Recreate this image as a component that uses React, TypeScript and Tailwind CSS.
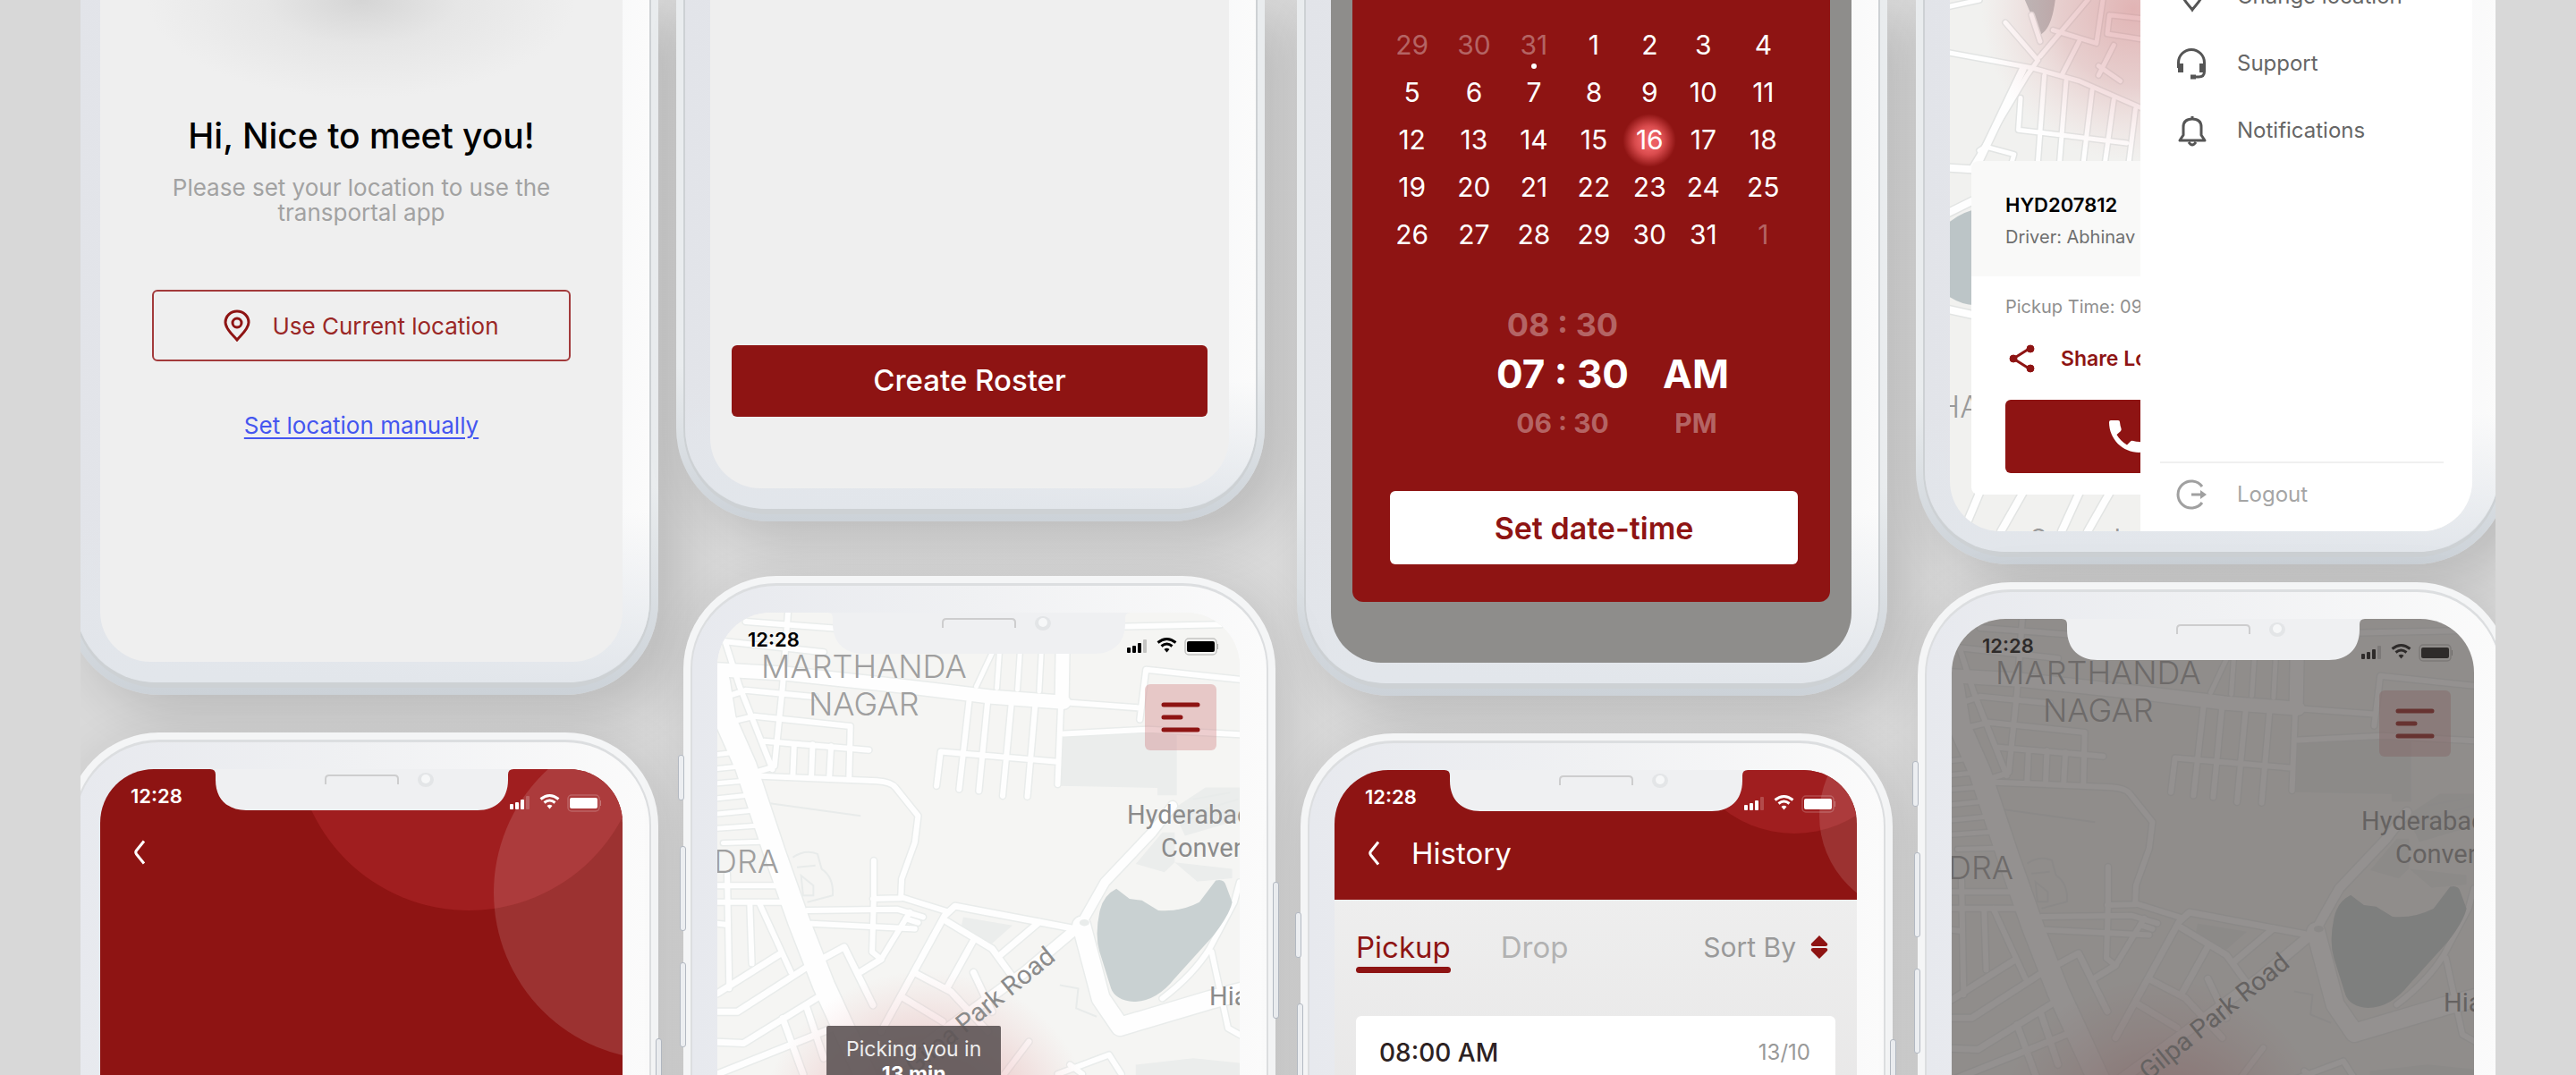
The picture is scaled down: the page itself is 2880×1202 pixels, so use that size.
import type { ReactNode } from "react";

type Road = [width: number, d: string];

/* ---------- Phone shell ---------- */

function SideButtons() {
  const edge = "absolute w-[7px] rounded-[3px] border border-[#b3b9c2] bg-[#eceef1]";
  return (
    <>
      <span className={`${edge} -left-[6px] top-[200px] h-[51px]`} />
      <span className={`${edge} -left-[4px] top-[302px] h-[95px]`} />
      <span className={`${edge} -left-[4px] top-[432px] h-[95px]`} />
      <span className={`${edge} -right-[4px] top-[342px] h-[153px]`} />
    </>
  );
}

function TopPhone({ className, screen, children }: { className: string; screen: string; children: ReactNode }) {
  return (
    <section
      className={`rounded-b-[104px] bg-linear-to-b from-[#e9ecee] from-70% to-[#ccd2d8] px-2 pb-2 shadow-[24px_20px_60px_rgba(0,0,0,0.14)] ${className}`}
    >
      <div className="rounded-b-[96px] border-x-2 border-b-[6px] border-[#cdd1d4] bg-linear-to-r from-[#e2e4e9] via-[#e9ebf0] via-50% to-[#fbfbfb]">
        <div className="rounded-b-[90px] bg-linear-to-b from-transparent from-75% to-[#e2e6eb] pr-[30px] pb-[23px] pl-[28px]">
          <div className={`relative overflow-hidden rounded-b-[56px] ${screen}`}>{children}</div>
        </div>
      </div>
    </section>
  );
}

function Notch() {
  return (
    <div className="pointer-events-none absolute inset-x-0 top-0 z-20 flex justify-center">
      <svg width="339" height="47" viewBox="0 0 339 47" aria-hidden="true">
        <path d="M0 0Q6 0 6 6V12C6 34 20 46 40 46H299C319 46 333 34 333 12V6Q333 0 339 0Z" fill="#eff0f2" />
        <path d="M129 17V11Q129 7 133 7H206Q210 7 210 11V17" fill="none" stroke="#cdcdce" strokeWidth="2" />
        <ellipse cx="241" cy="12" rx="9" ry="8" fill="#e3e5e7" />
        <ellipse cx="241" cy="11" rx="5" ry="5" fill="#f6f7f8" />
      </svg>
    </div>
  );
}

function BottomPhone({ screen, children }: { screen: string; children: ReactNode }) {
  return (
    <section className="relative rounded-t-[104px] bg-[#f4f5f6] px-2 pt-2 shadow-[10px_10px_60px_rgba(0,0,0,0.12)]">
      <SideButtons />
      <div className="relative rounded-t-[96px] border-x-2 border-t-[3px] border-[#dcdee0] bg-linear-to-r from-[#e7e9ee] via-[#f0f1f3] via-50% to-[#fbfbfb]">
        <div className="pt-[30px] pr-[30px] pl-[28px]">
          <div className={`relative min-h-[600px] overflow-hidden rounded-t-[60px] ${screen}`}>
            {children}
            <Notch />
          </div>
        </div>
      </div>
    </section>
  );
}

function StatusBar() {
  return (
    <div className="relative flex items-start justify-between pt-4 pr-6 pl-[34px]">
      <span className="text-[22px] leading-7 font-semibold">12:28</span>
      <svg className="mt-2" width="104" height="28" viewBox="0 0 104 28" fill="currentColor" aria-hidden="true">
        <rect x="2" y="15" width="4" height="6" rx="1" />
        <rect x="8" y="13" width="4" height="8" rx="1" />
        <rect x="14" y="10" width="4" height="11" rx="1" />
        <rect x="20" y="6" width="4" height="15" rx="1" opacity=".2" />
        <path d="M46.500 20.500l-3-3.500q3-2.500 6 0z" />
        <path d="M40.500 13.500q6-5 12 0M36.500 9.500q10-8 20 0" fill="none" stroke="currentColor" strokeWidth="3" />
        <rect x="67" y="5" width="35" height="18" rx="4" fill="none" stroke="currentColor" strokeWidth="1.500" opacity=".2" />
        <rect x="69" y="8" width="31" height="12" rx="2" />
        <rect x="103" y="11" width="1" height="6" opacity=".3" />
      </svg>
    </div>
  );
}

function BackButton() {
  return (
    <button type="button" aria-label="Back" className="flex h-10 w-5 items-center justify-center">
      <svg width="16" height="28" viewBox="0 0 16 28" fill="none" stroke="currentColor" strokeWidth="3" aria-hidden="true">
        <path d="M13 1.500L4.500 12q-1.500 2 0 4L13 26.500" />
      </svg>
    </button>
  );
}

/* ---------- Maps ---------- */

const CITY_ROADS: Road[] = [
  [6, "M200 205L415 225M150 265L390 297M303 178L290 400L270 640M150 265L185 400L265 650"],
  [6, "M131 440L200 412L370 432M170 505L220 490L455 520L452 672M245 565L500 592M318 575L315 665M363 575L360 668M408 580L404 668M222 660L262 645"],
  [5, "M818 300L812 405M868 300L862 410M920 300L915 415M800 300L762 400"],
  [6, "M745 435L720 710M790 437L768 715M848 440L826 730M906 445L886 732M665 700L675 597L960 627M968 450L960 695"],
  [6, "M975 448L1160 465M1160 500L1175 350L1407 380M975 543L1180 530L1407 545M1125 220L1357 214"],
  [5, "M131 605L165 600M131 648L180 642M131 692L195 685M131 738L205 728M131 784L215 774M131 828L225 820M145 872L238 868"],
  [6, "M235 670L520 685Q555 688 565 705L620 790L612 870L580 980L578 1035L690 1078M512 925L512 1040L508 1200L530 1222L600 1080M510 1040L578 1038"],
  [6, "M131 1000L290 1000M131 1050L330 1050M155 965L160 1310M210 1050L215 1235M232 1050L310 1260M131 1115L155 1118"],
  [6, "M350 1075L570 1072L632 1095M360 1115L612 1130M590 1100L620 1112"],
  [7, "M131 1325L285 1205M131 1380L180 1380L350 1245L440 1185L510 1360M480 1260L530 1222M131 1472L195 1475L385 1330M131 1568L330 1470L410 1430M348 1365L390 1520M290 1400L340 1568"],
  [7, "M530 1440L685 1090L710 1062L1000 1130M690 1108L800 1190L850 1275M915 1110L815 1215M755 1165L690 1310M615 1265L700 1320L790 1440M580 1335L680 1410M755 1262L800 1380"],
  [6, "M890 1470L830 1568M960 1568L1085 1510L1115 1568M990 1540L1020 1568M1215 1340Q1290 1270 1330 1190L1390 1050L1403 990M1335 1200L1375 1430L1407 1452"],
  [10, "M1020 1110L1075 990L1190 840L1240 760"],
  [11, "M1005 1130L880 1260L540 1568"],
  [15, "M131 350L300 362L600 402L800 432L975 448M972 300L970 450"],
  [20, "M1018 1120L1065 1340L1112 1425L1330 1345L1407 1320"],
  [24, "M135 385L150 500L200 640L270 900L330 1110L390 1300L490 1568"],
];

const SUBURB_ROADS: Road[] = [
  [5, "M110 20L190 0M120 140L310 180L420 215L570 290M330 150L440 0M250 60L325 160M325 160L300 200L175 440M310 40L330 110"],
  [5, "M285 260L280 345L530 380M340 200L325 430M390 215L375 430M450 240L430 430M500 265L480 430M550 290L535 430M205 390L270 410L265 430"],
  [5, "M360 80L460 115L475 0M420 110L380 200M500 120L465 200M465 175L515 215M490 40L570 50M490 40L485 90L570 105M190 400L210 385"],
  [8, "M110 445L180 450L290 185M110 570L180 530M110 820L190 840M190 1310L150 1420M290 1310L240 1411M420 1310L380 1411M490 1310L440 1411"],
];

function Roads({ roads, casing }: { roads: Road[]; casing: string }) {
  return (
    <g fill="none" strokeLinecap="round" strokeLinejoin="round">
      {roads.map(([w, d]) => (
        <path key={`c${d}`} d={d} stroke={casing} strokeWidth={w + 3} vectorEffect="non-scaling-stroke" />
      ))}
      {roads.map(([w, d]) => (
        <path key={d} d={d} stroke="#fefefe" strokeWidth={w} vectorEffect="non-scaling-stroke" />
      ))}
    </g>
  );
}

function CityMap({ id }: { id: string }) {
  return (
    <svg
      className="absolute inset-0 h-full w-full bg-[#f5f5f3]"
      viewBox="0 0 584 600"
      preserveAspectRatio="xMidYMin slice"
      role="img"
      aria-label="City map"
    >
      <defs>
        <radialGradient id={id}>
          <stop offset="0" stopColor="#c9585c" stopOpacity=".6" />
          <stop offset=".55" stopColor="#d88083" stopOpacity=".3" />
          <stop offset="1" stopColor="#e6a0a0" stopOpacity="0" />
        </radialGradient>
      </defs>
      <g transform="scale(.459 .3712) translate(-131 -178)">
        <g fill="#ebedec">
          <path d="M970 550L1180 535L1250 540V728H1203V706L965 700Z" />
          <path d="M1215 840L1150 935L1220 960L1245 930V840ZM1245 930L1385 950V978L1300 988ZM1240 770L1320 705H1407V800L1270 850Z" />
          <path d="M730 1095L850 1120L800 1175L725 1125ZM1150 1540L1290 1520L1407 1535V1640H1150Z" />
        </g>
        <g fill="none" stroke="#e8ebea" strokeWidth="2">
          <path d="M255 752L480 790M315 915Q345 890 375 905L385 950Q415 975 412 1030L350 1050M325 945L370 940M335 970L365 1000V1030H340Z" vectorEffect="non-scaling-stroke" />
          <path d="M965 1300L1010 1310L1005 1370L1055 1395M1265 790L1400 740M1280 800L1390 775M1290 740L1380 720" vectorEffect="non-scaling-stroke" />
        </g>
        <Roads roads={CITY_ROADS} casing="#e9eceb" />
        <ellipse cx="1025" cy="1112" rx="12" ry="10" fill="#e9eceb" />
        <path
          d="M1103 1010L1135 1040L1165 1045L1205 1075Q1260 1080 1305 1050L1345 985Q1365 978 1370 1000L1385 1050Q1380 1085 1340 1150L1245 1280Q1200 1350 1145 1350Q1100 1345 1090 1310L1062 1200Q1050 1150 1062 1080Q1070 1030 1103 1010Z"
          fill="#c9d1d2"
        />
      </g>
      <circle cx="234" cy="590" r="190" fill={`url(#${id})`} />
      <g className="font-[Inter] text-[36px]" fill="#9f9f9f" fontWeight="300">
        <text x="49" y="73">MARTHANDA</text>
        <text x="102" y="115">NAGAR</text>
        <text x="-4" y="291">DRA</text>
      </g>
      <g className="font-[Roboto] text-[29px]" fill="#8b8b8b">
        <text x="458" y="236">Hyderabad</text>
        <text x="496" y="273">Convention</text>
        <text x="550" y="439">Hiab</text>
        <text transform="translate(220 517) rotate(-39)">Gilpa Park Road</text>
      </g>
    </svg>
  );
}

function MenuButton() {
  return (
    <button
      type="button"
      aria-label="Menu"
      className="absolute top-20 right-[26px] flex h-[74px] w-20 items-center justify-center rounded-md bg-[#c85f63]/30"
    >
      <svg width="44" height="34" viewBox="0 0 44 34" stroke="#8e1413" strokeWidth="5" strokeLinecap="round" aria-hidden="true">
        <path d="M3 3H41M3 17H22M3 31H41" />
      </svg>
    </button>
  );
}

/* ---------- Screens ---------- */

function WelcomeScreen() {
  return (
    <div className="flex flex-col items-center bg-[radial-gradient(ellipse_240px_110px_at_50%_0,#d5d5d5,#e6e6e6_45%,transparent)] px-[58px] pt-32 pb-[248px] text-center">
      <h1 className="text-[39px] leading-[48px] font-medium whitespace-nowrap text-black">Hi, Nice to meet you!</h1>
      <p className="mt-5 text-[26px] leading-7 whitespace-nowrap text-[#a2a2a2]">
        Please set your location to use the
        <br />
        transportal app
      </p>
      <button
        type="button"
        className="mt-[72px] flex h-20 w-full items-center justify-center gap-6 rounded-md border-2 border-[#a23a3b] text-[26px] text-[#9a2726]"
      >
        <svg width="30" height="36" viewBox="0 0 30 36" fill="none" stroke="#8e1413" strokeWidth="3" aria-hidden="true">
          <path d="M15 34C11 29 2 22 2 14.500A13 12.500 0 0 1 28 14.500C28 22 19 29 15 34Z" />
          <circle cx="15" cy="15" r="5" />
        </svg>
        Use Current location
      </button>
      <a href="#manual" className="mt-14 text-[26px] leading-8 text-[#4456f0] underline decoration-2 underline-offset-4">
        Set location manually
      </a>
    </div>
  );
}

function RosterScreen() {
  return (
    <div className="px-6 pt-[386px] pb-20">
      <button type="button" className="h-20 w-full rounded-md bg-[#8e1413] text-[33px] font-medium text-white">
        Create Roster
      </button>
    </div>
  );
}

const WEEKS = [
  [29, 30, 31, 1, 2, 3, 4],
  [5, 6, 7, 8, 9, 10, 11],
  [12, 13, 14, 15, 16, 17, 18],
  [19, 20, 21, 22, 23, 24, 25],
  [26, 27, 28, 29, 30, 31, 1],
];

function DateTimeScreen() {
  return (
    <div className="px-6 pb-[68px]">
      <div className="rounded-b-xl bg-[#8e1413] pt-6 pb-[42px] text-white">
        <div className="pr-10 pl-8">
          <table className="w-full table-fixed text-center text-[30px]" aria-label="Calendar">
            <colgroup>
              <col className="w-[15%]" />
              <col className="w-[15%]" />
              <col className="w-[14%]" />
              <col className="w-[15%]" />
              <col className="w-[12%]" />
              <col className="w-[14%]" />
              <col className="w-[15%]" />
            </colgroup>
            <tbody>
              {WEEKS.map((week, w) => (
                <tr key={w} className="h-[53px]">
                  {week.map((day, d) => {
                    const outside = (w === 0 && day > 20) || (w === 4 && day < 10);
                    const selected = day === 16;
                    const today = w === 0 && day === 31;
                    return (
                      <td key={d} className="p-0">
                        <button type="button" className={`relative leading-[53px] ${outside ? "text-white/35" : ""}`}>
                          {selected && (
                            <span className="absolute top-1/2 left-1/2 size-[60px] -translate-1/2 rounded-full bg-[radial-gradient(circle,#ec5f62_20%,#d94b4d_38%,transparent_70%)]" />
                          )}
                          <span className="relative">{day}</span>
                          {today && <span className="absolute bottom-0 left-1/2 size-[6px] -translate-x-1/2 rounded-full bg-white" />}
                        </button>
                      </td>
                    );
                  })}
                </tr>
              ))}
            </tbody>
          </table>
        </div>
        <div className="mt-[54px] ml-40 grid grid-cols-[150px_76px] grid-rows-[40px_70px_40px] items-center justify-items-center gap-x-9 font-bold whitespace-nowrap">
          <button type="button" className="text-[36px] text-white/35">08 : 30</button>
          <span />
          <span className="text-[44px]">07 : 30</span>
          <span className="text-[44px]">AM</span>
          <button type="button" className="text-[30px] text-white/35">06 : 30</button>
          <button type="button" className="text-[30px] text-white/35">PM</button>
        </div>
        <div className="mt-14 pr-9 pl-[42px]">
          <button type="button" className="h-[82px] w-full rounded-md bg-white text-[34px] font-semibold text-[#8e1413]">
            Set date-time
          </button>
        </div>
      </div>
    </div>
  );
}

function DrawerScreen() {
  const item = "flex h-[75px] items-center gap-[34px] text-left text-[24px] text-[#666]";
  return (
    <div className="h-[594px]">
      <svg className="absolute inset-0 h-full w-full" viewBox="0 0 584 594" preserveAspectRatio="xMinYMin slice" role="img" aria-label="Route map">
        <defs>
          <radialGradient id="pickup-glow">
            <stop offset="0" stopColor="#c9585c" stopOpacity=".4" />
            <stop offset=".5" stopColor="#c9686c" stopOpacity=".25" />
            <stop offset="1" stopColor="#e6a0a0" stopOpacity="0" />
          </radialGradient>
        </defs>
        <g transform="scale(.4847 .4209) translate(-122 0)">
          <path d="M295 0H365Q355 90 322 95L310 40Z" fill="#b9bcbc" />
          <path d="M110 600Q150 560 190 555V810Q150 815 110 780Z" fill="#bcc5c7" />
          <Roads roads={SUBURB_ROADS} casing="#e2e4e3" />
        </g>
        <circle cx="205" cy="10" r="170" fill="url(#pickup-glow)" />
        <g className="font-[Inter]" fill="#9a9a9a">
          <text x="-14" y="467" fontSize="34" fontWeight="300">HA</text>
          <text x="90" y="612" fontSize="28">Secunderabad</text>
        </g>
      </svg>

      <article className="absolute top-[180px] right-6 left-6 overflow-hidden rounded-lg bg-white whitespace-nowrap">
        <header className="bg-[#f9f9f8] px-[38px] pt-[33px] pb-7">
          <h2 className="text-[22px] leading-8 font-semibold text-black">HYD207812</h2>
          <p className="mt-1 text-[20px] leading-8 text-[#6f6f6f]">Driver: Abhinav</p>
        </header>
        <div className="px-[38px] pb-6">
          <p className="pt-[18px] text-[20px] leading-8 text-[#8f8f8f]">Pickup Time: 09:30 AM</p>
          <button type="button" className="mt-6 flex h-9 items-center gap-7 pl-1 text-[23px] font-semibold text-[#8e1413]">
            <svg width="30" height="34" viewBox="0 0 30 34" fill="#8e1413" stroke="#8e1413" aria-hidden="true">
              <path d="M24 5L5 17L24 29" fill="none" strokeWidth="3" />
              <circle cx="24" cy="6" r="4" />
              <circle cx="5" cy="17" r="4" />
              <circle cx="24" cy="28" r="4" />
            </svg>
            Share Location
          </button>
          <button type="button" aria-label="Call driver" className="mt-7 flex h-[82px] w-full items-center rounded-md bg-[#8e1413] pl-[116px] text-white">
            <svg width="36" height="36" viewBox="0 0 36 36" fill="currentColor" aria-hidden="true">
              <path d="M2 0H10Q12 0 12 2Q12.500 7 13.500 9Q14 11 13 12L8.500 16Q12.500 23 20 27.500L24 23.500Q25 22.500 27 23Q30 24 34 24Q36 24 36 26V34Q36 36 34 36C15 36 0 21 0 2Q0 0 2 0Z" />
            </svg>
          </button>
        </div>
      </article>

      <nav className="absolute inset-y-0 right-0 left-[213px] flex flex-col bg-white pr-8 pl-10" aria-label="Account">
        <div className="-mt-[42px] flex flex-col">
          <button type="button" className={item}>
            <svg width="34" height="38" viewBox="0 0 34 38" fill="none" stroke="#555" strokeWidth="3" aria-hidden="true">
              <path d="M18 34C14 28 6 22 6 14A12 12 0 0 1 30 14C30 22 22 28 18 34Z" />
              <circle cx="18" cy="14" r="4" />
            </svg>
            Change location
          </button>
          <button type="button" className={item}>
            <svg width="34" height="38" viewBox="0 0 34 38" fill="none" stroke="#555" strokeWidth="3" aria-hidden="true">
              <path d="M2.500 24V18A14.500 14.500 0 0 1 31.500 18V28Q31.500 34 25 34H17" />
              <path d="M5 19V29" strokeWidth="6" />
              <path d="M29 19V29" strokeWidth="6" />
              <path d="M16 34H22" strokeWidth="5" />
            </svg>
            Support
          </button>
          <button type="button" className={item}>
            <svg width="34" height="38" viewBox="0 0 34 38" fill="none" stroke="#555" strokeWidth="3" strokeLinejoin="round" aria-hidden="true">
              <path d="M4 30H32L28 24V15Q28 6 18 6Q8 6 8 15V24ZM18 6V3M14 32Q18 38 22 32" />
            </svg>
            Notifications
          </button>
        </div>
        <div className="mt-auto -ml-[18px] border-t-2 border-[#f0f0f0] pb-1.5 pl-[18px]">
          <button type="button" className="flex h-[70px] items-center gap-[34px] text-[24px] text-[#a5a5a5]">
            <svg width="34" height="34" viewBox="0 0 34 34" fill="none" stroke="#a0a0a0" strokeWidth="3" aria-hidden="true">
              <path d="M29 8A15 15 0 1 0 29 26M17 17H31" />
              <path d="M27 12L34 17L27 22Z" fill="#a0a0a0" stroke="none" />
            </svg>
            Logout
          </button>
        </div>
      </nav>
    </div>
  );
}

function DetailScreen() {
  return (
    <div className="text-white">
      <svg className="absolute inset-0 h-full w-full" viewBox="0 0 584 600" preserveAspectRatio="xMaxYMin slice" aria-hidden="true">
        <circle cx="412" cy="-36" r="194" fill="#a01e1f" />
        <circle cx="627" cy="138" r="187" fill="#fff" fillOpacity=".13" />
      </svg>
      <StatusBar />
      <div className="relative mt-[21px] pl-[34px]">
        <BackButton />
      </div>
    </div>
  );
}

function PickupMapScreen() {
  return (
    <>
      <CityMap id="glow-live" />
      <StatusBar />
      <MenuButton />
      <div className="absolute top-[462px] left-[122px] rounded-xs bg-[#5d5455]/90 px-[22px] py-3 text-center text-[23px] leading-7 text-[#eee]">
        Picking you in
        <br />
        <b className="text-white">13 min</b>
      </div>
    </>
  );
}

function HistoryScreen() {
  return (
    <>
      <header className="relative overflow-hidden bg-[#8e1413] pb-8 text-white">
        <svg className="absolute inset-0 h-full w-full" viewBox="0 0 584 145" preserveAspectRatio="xMaxYMin slice" aria-hidden="true">
          <circle cx="514" cy="-57" r="128" fill="#a01e1f" />
          <circle cx="652" cy="51" r="110" fill="#fff" fillOpacity=".13" />
        </svg>
        <StatusBar />
        <div className="relative mt-[21px] flex items-center gap-8 pl-[34px]">
          <BackButton />
          <h2 className="text-[33px] leading-10">History</h2>
        </div>
      </header>
      <div className="flex items-start justify-between pt-[35px] pr-8 pl-6">
        <div role="tablist" className="flex gap-14 text-[33px] leading-9">
          <button type="button" role="tab" aria-selected="true" className="text-[#8e1413]">
            Pickup
            <span className="mt-1 block h-[7px] rounded-full bg-[#8e1413]" />
          </button>
          <button type="button" role="tab" aria-selected="false" className="self-start text-[#b2b2b2]">
            Drop
          </button>
        </div>
        <button type="button" className="flex items-center gap-4 text-[30px] leading-9 text-[#999]">
          Sort By
          <svg width="20" height="26" viewBox="0 0 20 26" fill="#8e1413" aria-hidden="true">
            <path d="M10 0L19 9Q20 12 17 12H3Q0 12 1 9ZM10 26L19 17Q20 14 17 14H3Q0 14 1 17Z" />
          </svg>
        </button>
      </div>
      <article className="mx-6 mt-12 flex min-h-52 items-start justify-between rounded-md bg-white pt-[25px] pr-7 pl-[26px] leading-8">
        <h3 className="text-[28px] font-medium text-[#2d2222]">08:00 AM</h3>
        <time className="text-[24px] text-[#999]">13/10</time>
      </article>
    </>
  );
}

function DimmedMapScreen() {
  return (
    <>
      <CityMap id="glow-dimmed" />
      <StatusBar />
      <MenuButton />
      <div className="absolute inset-0 bg-[#4c4846]/60" />
    </>
  );
}

export default function App() {
  return (
    <main className="h-screen overflow-hidden bg-[#d8d8d8] px-[90px] font-[Inter,sans-serif]">
      <div className="h-full overflow-hidden bg-linear-to-r from-[#d9d9d9] to-[#dadada]">
        <div className="-mx-4 grid grid-cols-4 items-start gap-7">
          <div className="flex flex-col gap-[42px]">
            <TopPhone className="" screen="bg-[#efefef]">
              <WelcomeScreen />
            </TopPhone>
            <BottomPhone screen="bg-[#8e1413]">
              <DetailScreen />
            </BottomPhone>
          </div>
          <div className="flex flex-col gap-[61px]">
            <TopPhone className="mr-3 -ml-2" screen="bg-[#efefef]">
              <RosterScreen />
            </TopPhone>
            <BottomPhone screen="bg-[#f5f5f3]">
              <PickupMapScreen />
            </BottomPhone>
          </div>
          <div className="flex flex-col gap-[42px]">
            <TopPhone className="mr-1.5 -ml-1" screen="bg-[#8e8d8b]">
              <DateTimeScreen />
            </TopPhone>
            <BottomPhone screen="bg-linear-to-b from-[#f2f2f2] to-[#e2e1e1]">
              <HistoryScreen />
            </BottomPhone>
          </div>
          <div className="flex flex-col gap-5">
            <TopPhone className="mr-0.5 -ml-0.5" screen="bg-[#f1f1ef]">
              <DrawerScreen />
            </TopPhone>
            <BottomPhone screen="bg-[#f5f5f3]">
              <DimmedMapScreen />
            </BottomPhone>
          </div>
        </div>
      </div>
    </main>
  );
}
